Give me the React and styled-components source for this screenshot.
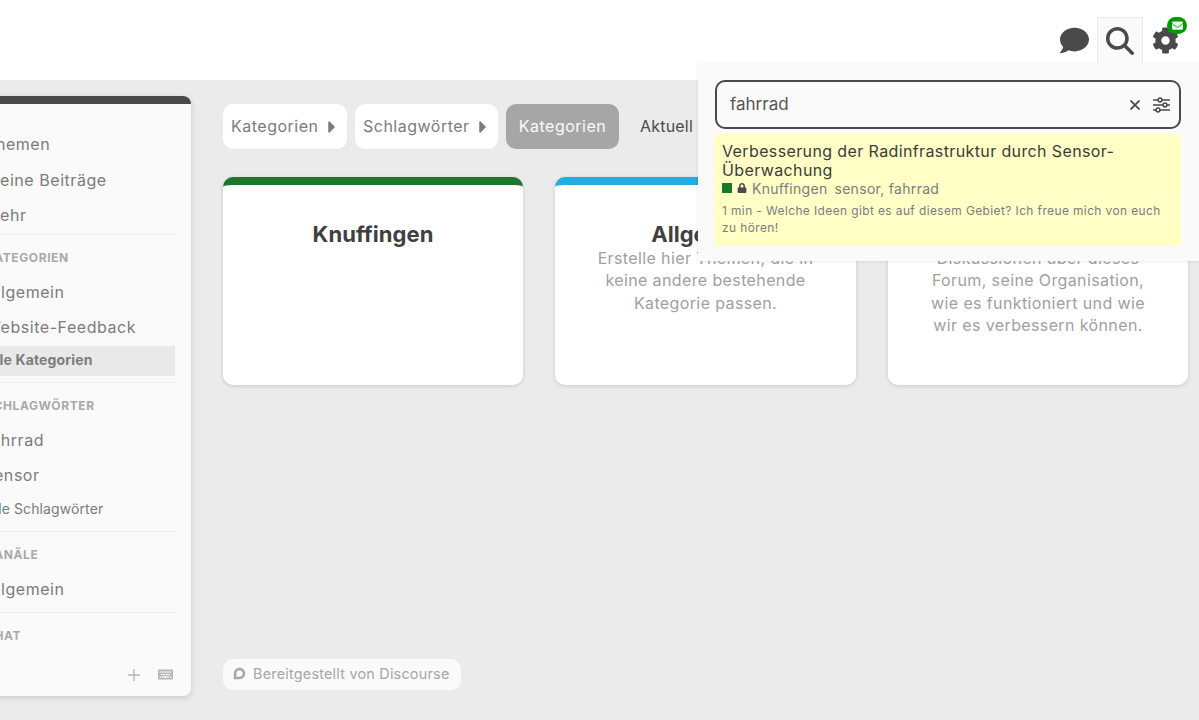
import React from "react";
import styled, { createGlobalStyle } from "styled-components";
import { FaComment, FaCog, FaEnvelope, FaLock, FaCaretRight, FaKeyboard } from "react-icons/fa";
import { FaMagnifyingGlass, FaDiscourse } from "react-icons/fa6";

const Global = createGlobalStyle`
  html, body { margin: 0; padding: 0; height: 720px; overflow: hidden; }
  body { font-family: Inter, "Noto Sans", sans-serif; background: #ebebeb; color: #444; }
  * { box-sizing: border-box; }
`;

const Page = styled.div`
  position: relative;
  width: 1199px;
  height: 720px;
  overflow: hidden;
  display: flex;
  flex-direction: column;
`;
const Header = styled.header`
  height: 80px;
  flex: none;
  background: #fff;
  display: flex;
  justify-content: flex-end;
  align-items: flex-start;
  padding: 17px 10px 0 0;
`;
const IconButton = styled.div`
  width: 46px;
  height: 46px;
  display: flex;
  align-items: center;
  justify-content: center;
  position: relative;
  color: #4a4a4a;
  border: 1px solid ${p => (p.$active ? "#e9e9e9" : "transparent")};
  border-bottom: none;
  background: ${p => (p.$active ? "#fafafa" : "transparent")};
`;
const GearWrap = styled.span`
  display: flex;
  margin-right: 1px;
`;
const Badge = styled.span`
  position: absolute;
  top: -1px;
  right: 1px;
  width: 20px;
  height: 17px;
  border-radius: 9px;
  background: #009900;
  color: #e8f5e8;
  display: flex;
  align-items: center;
  justify-content: center;
`;
const Body = styled.div`
  flex: 1;
  display: flex;
  min-height: 0;
`;
const Sidebar = styled.aside`
  flex: none;
  width: 240px;
  height: 600px;
  margin: 16px 0 0 -49px;
  background: #fafafa;
  border-top: 8px solid #4a4a4a;
  border-radius: 8px;
  box-shadow: 0 2px 6px rgba(0, 0, 0, 0.14);
  display: flex;
  flex-direction: column;
  overflow: hidden;
`;
const SideScroll = styled.div`
  flex: 1;
  overflow: hidden;
  padding: 23px 16px 0 34px;
  position: relative;
  &::after {
    content: "";
    position: absolute;
    left: 0;
    right: 0;
    bottom: 0;
    height: 18px;
    background: linear-gradient(rgba(250, 250, 250, 0), #fafafa);
  }
`;
const Section = styled.div`
  border-bottom: ${p => (p.$last ? "none" : "1px solid #eeeeee")};
  padding-bottom: ${p => p.$pb || 0}px;
  margin-bottom: 14px;
`;
const SideHead = styled.div`
  font-size: 12px;
  font-weight: 700;
  letter-spacing: 0.6px;
  color: #a9a9a9;
  height: 18px;
  line-height: 18px;
  margin-bottom: 8px;
`;
const SideRow = styled.div`
  height: 35.5px;
  line-height: 35.5px;
  font-size: 16px;
  letter-spacing: 0.55px;
  color: #7c7c7c;
  white-space: nowrap;
`;
const SmallRow = styled.div`
  height: 33px;
  line-height: 30px;
  font-size: 14px;
  letter-spacing: 0.1px;
  color: #7c7c7c;
  white-space: nowrap;
`;
const ActiveRow = styled.div`
  height: 30px;
  line-height: 28px;
  font-size: 14px;
  font-weight: 700;
  letter-spacing: 0.15px;
  color: #7c7c7c;
  background: #e9e9e9;
  white-space: nowrap;
  margin-bottom: 6px;
`;
const SideFoot = styled.div`
  flex: none;
  height: 41px;
  padding: 0 18px 2px 0;
  display: flex;
  justify-content: flex-end;
  align-items: center;
  gap: 18px;
  color: #b5b5b5;
`;
const Main = styled.main`
  flex: 1;
  min-width: 0;
  padding: 24px 0 30px 32px;
  display: flex;
  flex-direction: column;
`;
const Nav = styled.nav`
  display: flex;
  gap: 8px;
  align-items: center;
  height: 45px;
`;
const Drop = styled.div`
  height: 45px;
  padding: 0 5px 2px 8px;
  width: ${p => p.$w}px;
  background: #fff;
  border-radius: 10px;
  display: flex;
  align-items: center;
  justify-content: space-between;
  font-size: 16px;
  letter-spacing: 0.5px;
  color: #7c7c7c;
  svg { margin-top: 2px; }
`;
const ActiveTab = styled.div`
  height: 45px;
  width: 113px;
  padding-bottom: 2px;
  background: #a6a6a6;
  color: #fafafa;
  border-radius: 10px;
  display: flex;
  align-items: center;
  justify-content: center;
  font-size: 16px;
  letter-spacing: 0.5px;
`;
const NavLink = styled.div`
  font-size: 16px;
  letter-spacing: 0.2px;
  color: #4a4a4a;
  padding: 0 13px 2px;
`;
const Cards = styled.div`
  margin-top: 28px;
  display: grid;
  grid-template-columns: 300px 301px 300px;
  gap: 32px;
`;
const Card = styled.div`
  height: 208px;
  background: #fff;
  border-top: 8px solid ${p => p.$color};
  border-radius: 10px;
  box-shadow: 0 1px 4px rgba(0, 0, 0, 0.14);
  padding: 37px 40px 0;
  text-align: center;
`;
const CardTitle = styled.div`
  font-size: 22px;
  line-height: 25px;
  font-weight: 700;
  letter-spacing: 0.05px;
  color: #404040;
`;
const CardText = styled.div`
  font-size: 16px;
  line-height: 22.4px;
  letter-spacing: 0.38px;
  color: #a0a0a0;
`;
const Credit = styled.div`
  margin-top: auto;
  align-self: flex-start;
  height: 31px;
  width: 238px;
  padding: 0 10px 2px;
  background: #fafafa;
  border-radius: 10px;
  display: flex;
  align-items: center;
  gap: 7px;
  font-size: 14.4px;
  letter-spacing: 0.22px;
  color: #a6a6a6;
  white-space: nowrap;
`;
const Panel = styled.div`
  position: absolute;
  left: 698px;
  top: 63px;
  width: 501px;
  height: 198px;
  background: #fafafa;
  box-shadow: 0 1px 3px rgba(0, 0, 0, 0.08);
  padding: 17px 18px 0 17px;
`;
const SearchBox = styled.div`
  height: 49px;
  border: 2px solid #4a4a4a;
  border-radius: 10px;
  background: #fafafa;
  display: flex;
  align-items: center;
  padding: 0 9px 0 13px;
  font-size: 17px;
  color: #555;
`;
const SearchText = styled.span`
  flex: 1;
  padding-bottom: 2px;
`;
const SearchIcons = styled.span`
  display: flex;
  align-items: center;
  gap: 13px;
  color: #4a4a4a;
`;
const Result = styled.div`
  margin: 5px 0 0 -1px;
  height: 112px;
  background: #ffffc6;
  padding: 8px 8px 0;
`;
const ResultTitle = styled.div`
  font-size: 16px;
  line-height: 19px;
  letter-spacing: 0.38px;
  color: #3c3c3c;
`;
const ResultMeta = styled.div`
  display: flex;
  align-items: center;
  height: 18px;
  padding-bottom: 2px;
  font-size: 14px;
  letter-spacing: 0.3px;
  color: #7c7c7c;
  svg { color: #4a4a4a; }
`;
const Square = styled.span`
  width: 10px;
  height: 10px;
  background: #1c762e;
  margin-right: 5px;
`;
const Category = styled.span`
  margin-left: 5px;
`;
const Tags = styled.span`
  margin-left: 7px;
`;
const Blurb = styled.div`
  font-size: 11.9px;
  line-height: 17px;
  letter-spacing: 0.42px;
  margin-top: 4px;
  color: #7c7c7c;
`;

const Sliders = () => (
  <svg width="17" height="16" viewBox="0 0 17 16" fill="none" stroke="currentColor" strokeWidth="1.5">
    <path d="M0 3h5M9 3h8M0 8h10M14 8h3M0 13h3M7 13h10" />
    <circle cx="7" cy="3" r="1.9" />
    <circle cx="12" cy="8" r="1.9" />
    <circle cx="5" cy="13" r="1.9" />
  </svg>
);
const Cross = () => (
  <svg width="10" height="10" viewBox="0 0 10 10" fill="none" stroke="currentColor" strokeWidth="1.8">
    <path d="M0.5 0.5l9 9M9.5 0.5l-9 9" />
  </svg>
);
const Plus = () => (
  <svg width="12" height="12" viewBox="0 0 12 12" fill="none" stroke="currentColor" strokeWidth="1.4">
    <path d="M6 0v12M0 6h12" />
  </svg>
);

export default function App() {
  return (
    <Page>
      <Global />
      <Header>
        <IconButton><FaComment size={29} /></IconButton>
        <IconButton $active><FaMagnifyingGlass size={28} /></IconButton>
        <IconButton>
          <GearWrap><FaCog size={27} /></GearWrap>
          <Badge><FaEnvelope size={11} /></Badge>
        </IconButton>
      </Header>
      <Body>
        <Sidebar>
          <SideScroll>
            <Section>
              <SideRow>Themen</SideRow>
              <SideRow>Meine Beiträge</SideRow>
              <SideRow>Mehr</SideRow>
            </Section>
            <Section>
              <SideHead>KATEGORIEN</SideHead>
              <SideRow>Allgemein</SideRow>
              <SideRow>Website-Feedback</SideRow>
              <ActiveRow>Alle Kategorien</ActiveRow>
            </Section>
            <Section $pb={4}>
              <SideHead>SCHLAGWÖRTER</SideHead>
              <SideRow>fahrrad</SideRow>
              <SideRow>sensor</SideRow>
              <SmallRow>Alle Schlagwörter</SmallRow>
            </Section>
            <Section $pb={5}>
              <SideHead>KANÄLE</SideHead>
              <SideRow>Allgemein</SideRow>
            </Section>
            <Section $last>
              <SideHead>CHAT</SideHead>
            </Section>
          </SideScroll>
          <SideFoot>
            <Plus />
            <FaKeyboard size={15} />
          </SideFoot>
        </Sidebar>
        <Main>
          <Nav>
            <Drop $w={124}>Kategorien <FaCaretRight size={20} /></Drop>
            <Drop $w={143}>Schlagwörter <FaCaretRight size={20} /></Drop>
            <ActiveTab>Kategorien</ActiveTab>
            <NavLink>Aktuell</NavLink>
          </Nav>
          <Cards>
            <Card $color="#1c762e">
              <CardTitle>Knuffingen</CardTitle>
            </Card>
            <Card $color="#25aae1">
              <CardTitle>Allgemein</CardTitle>
              <CardText>Erstelle hier Themen, die in keine andere bestehende Kategorie passen.</CardText>
            </Card>
            <Card $color="#808281">
              <CardTitle>Website-Feedback</CardTitle>
              <CardText>Diskussionen über dieses Forum, seine Organisation, wie es funktioniert und wie wir es verbessern können.</CardText>
            </Card>
          </Cards>
          <Credit><FaDiscourse size={13} />Bereitgestellt von Discourse</Credit>
        </Main>
      </Body>
      <Panel>
        <SearchBox>
          <SearchText>fahrrad</SearchText>
          <SearchIcons><Cross /><Sliders /></SearchIcons>
        </SearchBox>
        <Result>
          <ResultTitle>Verbesserung der Radinfrastruktur durch Sensor-Überwachung</ResultTitle>
          <ResultMeta>
            <Square />
            <FaLock size={10} />
            <Category>Knuffingen</Category>
            <Tags>sensor, fahrrad</Tags>
          </ResultMeta>
          <Blurb>1 min - Welche Ideen gibt es auf diesem Gebiet? Ich freue mich von euch zu hören!</Blurb>
        </Result>
      </Panel>
    </Page>
  );
}
